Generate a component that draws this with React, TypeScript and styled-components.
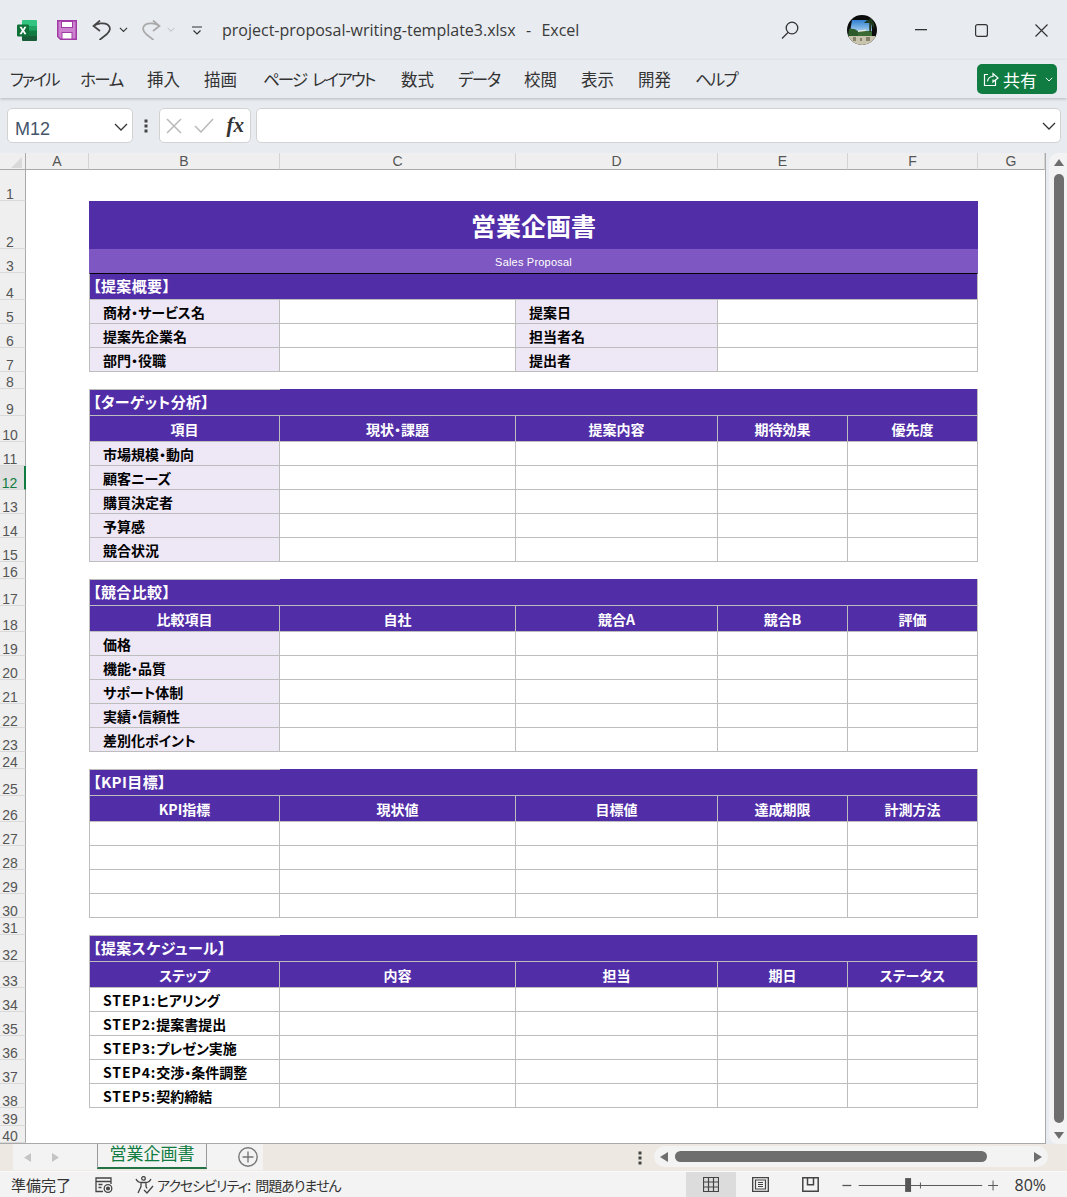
import React from "react";
import styled, { createGlobalStyle } from "styled-components";

const jp = `"Noto Sans CJK JP", "Noto Sans", sans-serif`;
const latin = `"Open Sans", "Noto Sans CJK JP", sans-serif`;
const line = "#bdbdbd";

const GlobalStyle = createGlobalStyle`
  html, body {
    margin: 0;
    padding: 0;
    overflow: hidden;
    background: #e8ebf0;
  }
  * {
    box-sizing: border-box;
  }
`;

const Window = styled.div`
  width: 1067px;
  height: 1197px;
  display: flex;
  flex-direction: column;
  background: #e8ebf0;
  overflow: hidden;
  font-family: ${jp};
  color: #333;
`;

/* title bar */
const TitleBar = styled.header`
  height: 60px;
  padding-left: 7px;
  display: flex;
  align-items: center;
  background: #e8ebf0;
`;

const Slot = styled.div<{ $w: number; $ml?: number }>`
  width: ${(p) => p.$w}px;
  margin-left: ${(p) => p.$ml ?? 0}px;
  flex: none;
  display: flex;
  align-items: center;
  justify-content: center;
`;

const FileName = styled.div`
  margin-left: 17px;
  font-family: ${latin};
  font-size: 16px;
  word-spacing: 1px;
  color: #3a3a3a;
  white-space: pre;
`;

const RightEdge = styled.div`
  margin-left: auto;
  display: flex;
  align-items: center;
`;

/* ribbon tabs */
const Ribbon = styled.nav`
  height: 38px;
  padding: 0 10px;
  display: flex;
  align-items: center;
  background: #e8ebf0;
  box-shadow: 0 1px 3px rgba(0, 0, 0, 0.22);
  position: relative;
`;

const RibbonTab = styled.span<{ $squeeze: number; $w: number }>`
  width: ${(p) => p.$w}px;
  flex: none;
  font-size: 16.5px;
  font-feature-settings: "palt";
  letter-spacing: ${(p) => p.$squeeze}px;
  word-spacing: 4px;
  color: #333;
  white-space: pre;
`;

const ShareButton = styled.button`
  margin-left: auto;
  width: 80px;
  height: 30px;
  border: 0;
  border-radius: 5px;
  padding: 0 0 0 6px;
  display: flex;
  align-items: center;
  gap: 4px;
  background: #107c41;
  color: #fff;
  font-family: ${jp};
  font-size: 17px;
`;

/* formula bar */
const FormulaBar = styled.div`
  height: 55px;
  padding: 10px 6px 10px 7px;
  display: flex;
  align-items: stretch;
`;

const Field = styled.div`
  background: #fff;
  border: 1px solid #d2d2d2;
  border-radius: 5px;
  display: flex;
  align-items: center;
`;

const NameBox = styled(Field)`
  width: 126px;
  padding: 0 4px 0 7px;
  justify-content: space-between;
  font-family: "Liberation Sans", sans-serif;
  font-size: 18px;
  color: #44546a;
  svg {
    margin-top: 3px;
  }
`;

const NameText = styled.span`
  padding-top: 7px;
`;

const GripSlot = styled.div`
  width: 26px;
  display: flex;
  align-items: center;
  justify-content: center;
`;

const FxBox = styled(Field)`
  width: 92px;
  padding: 0 6px;
  justify-content: space-between;
`;

const FxLabel = styled.span`
  font-family: "Liberation Serif", serif;
  font-style: italic;
  font-weight: 700;
  font-size: 21px;
  color: #333;
`;

const FormulaInput = styled(Field)`
  flex: 1;
  margin-left: 5px;
  padding-right: 4px;
  justify-content: flex-end;
`;

/* sheet */
const Main = styled.main`
  height: 991px;
  display: flex;
`;

const SheetFrame = styled.div`
  width: 1046px;
  flex: none;
  overflow: hidden;
  background: #fff;
  border-right: 1px solid #a9a9a9;
  border-bottom: 1px solid #a9a9a9;
`;

const SheetTable = styled.table`
  table-layout: fixed;
  border-collapse: separate;
  border-spacing: 0;
  width: 1045px;
  font-family: ${jp};
`;

const ColHead = styled.th`
  height: 17px;
  padding: 1px 0 0;
  background: #efefef;
  border-right: 1px solid #d4d4d4;
  border-bottom: 1px solid #a9a9a9;
  font-family: "Liberation Sans", sans-serif;
  font-size: 14px;
  font-weight: 400;
  line-height: 15px;
  color: #555;
`;

const Corner = styled(ColHead)`
  padding: 0;
  border-right: 1px solid #a9a9a9;
  svg {
    display: block;
    margin: 3px 0 0 11px;
  }
`;

const RowHead = styled.th<{ $active?: boolean }>`
  padding: 0 5px 0 0;
  text-align: center;
  vertical-align: bottom;
  background: ${(p) => (p.$active ? "#dfdfdf" : "#efefef")};
  border-right: ${(p) => (p.$active ? "2px solid #107c41" : "1px solid #a9a9a9")};
  border-bottom: 1px solid #d9d9d9;
  font-family: "Liberation Sans", sans-serif;
  font-size: 14px;
  font-weight: 400;
  line-height: 11px;
  color: ${(p) => (p.$active ? "#107c41" : "#555")};
`;

const Cell = styled.td`
  padding: 0;
  overflow: hidden;
  white-space: nowrap;
`;

const BoxCell = styled(Cell)`
  border-right: 1px solid ${line};
  border-bottom: 1px solid ${line};
  font-size: 14px;
  font-weight: 700;
  font-feature-settings: "palt";
  color: #000;
  tr > &:nth-child(3) {
    border-left: 1px solid ${line};
  }
`;

const LabelCell = styled(BoxCell)<{ $fill?: boolean }>`
  padding: 1px 0 0 13px;
  background: ${(p) => (p.$fill ? "#ede7f6" : "#fff")};
`;

const HeadCell = styled(BoxCell)`
  padding-top: 1px;
  text-align: center;
  background: #512da8;
  color: #fff;
`;

const SectionCell = styled(BoxCell)<{ $rule?: string }>`
  padding: 0 0 3px 3px;
  background: #512da8;
  color: #fff;
  font-size: 15px;
  letter-spacing: 0.4px;
  border-right: 0;
  border-top: ${(p) => (p.$rule ? `1px solid ${p.$rule}` : "0")};
`;

const SectionRest = styled(BoxCell)<{ $rule?: string }>`
  background: #512da8;
  border-top: ${(p) => (p.$rule ? `1px solid ${p.$rule}` : "0")};
`;

const TitleCell = styled(Cell)`
  padding-top: 0;
  text-align: center;
  background: #512da8;
  color: #fff;
  font-size: 25px;
  font-weight: 700;
`;

const SubtitleCell = styled(Cell)`
  padding-top: 1px;
  text-align: center;
  background: #7e57c2;
  color: #fff;
  font-family: "Liberation Sans", sans-serif;
  font-size: 11px;
  letter-spacing: 0.2px;
`;

const StepPrefix = styled.span`
  letter-spacing: 0.9px;
`;

/* vertical scroller */
const VScroll = styled.div`
  width: 18px;
  margin-left: 3px;
  padding: 5px 0 4px 5px;
  display: flex;
  flex-direction: column;
  background: #f3f3f3;
  border-radius: 9px 0 0 9px;
`;

const VThumb = styled.div`
  flex: 1;
  width: 10px;
  margin: 7px 0 8px;
  border-radius: 5px;
  background: #6e6e6e;
`;

/* sheet tabs */
const TabBar = styled.div`
  height: 27px;
  padding-left: 13px;
  display: flex;
  align-items: stretch;
  background: #ede8e2;
`;

const TabNav = styled.div`
  width: 84px;
  height: 26px;
  padding-left: 11px;
  display: flex;
  align-items: center;
  gap: 21px;
  background: #f3f3f3;
`;

const SheetTab = styled.div`
  width: 110px;
  height: 25px;
  text-align: center;
  background: #f3f3f3;
  border-left: 1px solid #999;
  border-right: 1px solid #999;
  border-bottom: 2px solid #217346;
  color: #107c41;
  font-size: 17px;
  line-height: 18px;
`;

const AddBlock = styled.div`
  width: 56px;
  height: 26px;
  padding-left: 31px;
  display: flex;
  align-items: center;
  background: #f3f3f3;
`;

const TabGrip = styled.div`
  margin-left: 369px;
  width: 16px;
  display: flex;
  align-items: center;
  justify-content: center;
`;

const HScroll = styled.div`
  width: 394px;
  height: 21px;
  margin: 2px 0 0 6px;
  padding: 0 5px 0 6px;
  display: flex;
  align-items: center;
  background: #f3f3f3;
  border-radius: 11px;
`;

const HThumb = styled.div`
  width: 312px;
  height: 11px;
  margin: 0 47px 0 7px;
  border-radius: 6px;
  background: #6e6e6e;
`;

/* status bar */
const StatusBar = styled.footer`
  height: 26px;
  padding-left: 11px;
  display: flex;
  align-items: center;
  background: #f3f3f3;
  border-top: 1px solid #fafafa;
  color: #333;
`;

const StatusText = styled.span`
  font-size: 15px;
  white-space: pre;
`;

const AccessText = styled.span`
  margin-left: 3px;
  font-size: 14px;
  font-feature-settings: "palt";
  letter-spacing: -1px;
  word-spacing: 3px;
  white-space: pre;
`;

const ViewButton = styled.div<{ $active?: boolean; $ml?: number }>`
  width: 50px;
  height: 25px;
  margin-left: ${(p) => p.$ml ?? 0}px;
  flex: none;
  display: flex;
  align-items: center;
  justify-content: center;
  background: ${(p) => (p.$active ? "#dcdcdc" : "transparent")};
`;

const ZoomLabel = styled.span`
  margin-left: 17px;
  font-family: ${latin};
  font-size: 16px;
`;

/* icons */
const Chevron = ({ size = 10, color = "#333" }: { size?: number; color?: string }) => (
  <svg width={size} height={size * 0.6} viewBox="0 0 10 6" fill="none">
    <path d="M1 1l4 4 4-4" stroke={color} strokeWidth="1.2" />
  </svg>
);

const ExcelLogo = () => (
  <svg width="20" height="21" viewBox="0 0 20 21">
    <rect x="5" y="0" width="15" height="21" rx="1.5" fill="#21a366" />
    <path d="M6.5 0H18.5A1.5 1.5 0 0 1 20 1.5V6H5V1.5A1.5 1.5 0 0 1 6.5 0Z" fill="#33c481" />
    <rect x="12" y="10.500" width="8" height="5" fill="#107c41" />
    <path d="M5 15.500H20V19.500A1.500 1.500 0 0 1 18.500 21H6.500A1.500 1.500 0 0 1 5 19.500Z" fill="#185c37" />
    <rect x="0" y="4.500" width="12" height="12" rx="1.200" fill="#0f7038" />
    <path d="M2.500 6.800h2.200L6 9.300l1.300-2.500h2.200L7.200 10.500l2.300 3.700H7.300L6 11.700l-1.300 2.500H2.500l2.300-3.700z" fill="#fff" />
  </svg>
);

const SaveIcon = () => (
  <svg width="20" height="20" viewBox="0 0 20 20">
    <path d="M.75.75h18.500v18.500H3.500L.75 16.500z" fill="#cc82cf" stroke="#a13aa5" strokeWidth="1.500" />
    <rect x="4.500" y="1.500" width="11" height="6" fill="#fff" stroke="#a13aa5" />
    <rect x="5" y="12.500" width="10" height="6.500" fill="#fff" stroke="#a13aa5" />
  </svg>
);

const UndoIcon = ({ color, flip }: { color: string; flip?: boolean }) => (
  <svg width="20" height="20" viewBox="0 0 20 20" fill="none" style={flip ? { transform: "scaleX(-1)" } : undefined}>
    <path
      d="M8 .5L1.500 6 8 11M1.500 6C6 3 12 2.500 15.500 4.500 19.500 7.500 18 11 15 14L7.500 20"
      stroke={color}
      strokeWidth="1.700"
    />
  </svg>
);

const Avatar = () => (
  <svg width="32" height="32" viewBox="0 0 32 32">
    <defs>
      <clipPath id="avatarClip">
        <circle cx="16" cy="16" r="15" />
      </clipPath>
      <linearGradient id="avatarSky" x1="0" y1="0" x2="0" y2="1">
        <stop offset="0" stopColor="#2f7fd0" />
        <stop offset="1" stopColor="#a9d3ee" />
      </linearGradient>
    </defs>
    <g clipPath="url(#avatarClip)">
      <rect width="32" height="32" fill="#0c0c0c" />
      <path d="M6 6h20v12H4z" fill="url(#avatarSky)" />
      <path d="M3 15c4-1 7 0 10 3l-1 4H2z" fill="#2f5a2c" />
      <path d="M12 17h14v5H12z" fill="#3c6a35" />
      <path d="M12 16.500l8-1v1.500l-8 1z" fill="#e6e6de" />
      <path d="M24 4c-1 4-1 9-.5 14h1.500c0-5 1-9 1-13z" fill="#2a3a22" />
      <path d="M18 9c2-3 5-4 8-3 2 2 3 5 2 9-1-3-3-5-4-6-2 0-4 0-6 0z" fill="#1e3a1d" />
      <path d="M3 22h26v9H3z" fill="#c9c4ae" />
      <path d="M7 23h3v4H7zM14 24h2v3h-2zM20 23h4v4h-4z" fill="#86826b" />
    </g>
  </svg>
);

const ShareIcon = () => (
  <svg width="16" height="16" viewBox="0 0 16 16" fill="none" stroke="#fff" strokeWidth="1.200">
    <path d="M5 3.500H1.500v11h11V9" />
    <path d="M4.500 10.500C5 7 7 5.500 10 5.500V2.500l5 4.500-5 4V8.500" />
  </svg>
);

const Grip = () => (
  <svg width="4" height="14" viewBox="0 0 4 14" fill="#444">
    <rect x="0.500" y="0.500" width="3" height="3" />
    <rect x="0.500" y="5.500" width="3" height="3" />
    <rect x="0.500" y="10.500" width="3" height="3" />
  </svg>
);

const Tri = ({ dir, size = 10, color = "#6e6e6e" }: { dir: "up" | "down" | "left" | "right"; size?: number; color?: string }) => {
  const paths = { up: "M5 1l5 7H0z", down: "M5 8L0 1h10z", left: "M0 5l8-5v10z", right: "M8 5L0 0v10z" };
  const box = dir === "up" || dir === "down" ? "0 0 10 9" : "0 0 8 10";
  const w = dir === "up" || dir === "down" ? size : size * 0.8;
  const h = dir === "up" || dir === "down" ? size * 0.9 : size;
  return (
    <svg width={w} height={h} viewBox={box} fill={color} style={{ flex: "none" }}>
      <path d={paths[dir]} />
    </svg>
  );
};

/* sheet rows */
type SheetRow =
  | { h: number; kind: "blank" }
  | { h: number; kind: "title" | "subtitle"; text: string }
  | { h: number; kind: "section"; text: string; rule: string; restRule?: string }
  | { h: number; kind: "pairs"; left: string; right: string }
  | { h: number; kind: "heads"; cells: string[] }
  | { h: number; kind: "items"; label: string; fill: boolean };

const block = (title: string, heads: string[], labels: string[], fill: boolean): SheetRow[] => [
  { h: 27, kind: "section", text: title, rule: line },
  { h: 26, kind: "heads", cells: heads },
  ...labels.map((label): SheetRow => ({ h: 24, kind: "items", label, fill })),
  { h: 17, kind: "blank" },
];

const sheetRows: SheetRow[] = [
  { h: 31, kind: "blank" },
  { h: 48, kind: "title", text: "営業企画書" },
  { h: 24, kind: "subtitle", text: "Sales Proposal" },
  { h: 27, kind: "section", text: "【提案概要】", rule: "#000", restRule: "#000" },
  { h: 24, kind: "pairs", left: "商材・サービス名", right: "提案日" },
  { h: 24, kind: "pairs", left: "提案先企業名", right: "担当者名" },
  { h: 24, kind: "pairs", left: "部門・役職", right: "提出者" },
  { h: 17, kind: "blank" },
  ...block(
    "【ターゲット分析】",
    ["項目", "現状・課題", "提案内容", "期待効果", "優先度"],
    ["市場規模・動向", "顧客ニーズ", "購買決定者", "予算感", "競合状況"],
    true
  ),
  ...block(
    "【競合比較】",
    ["比較項目", "自社", "競合A", "競合B", "評価"],
    ["価格", "機能・品質", "サポート体制", "実績・信頼性", "差別化ポイント"],
    true
  ),
  ...block("【KPI目標】", ["KPI指標", "現状値", "目標値", "達成期限", "計測方法"], ["", "", "", ""], false),
  ...block(
    "【提案スケジュール】",
    ["ステップ", "内容", "担当", "期日", "ステータス"],
    ["STEP1:ヒアリング", "STEP2:提案書提出", "STEP3:プレゼン実施", "STEP4:交渉・条件調整", "STEP5:契約締結"],
    false
  ).slice(0, -1),
  { h: 18, kind: "blank" },
  { h: 17, kind: "blank" },
];

const columns = [
  { name: "", w: 26 },
  { name: "A", w: 63 },
  { name: "B", w: 191 },
  { name: "C", w: 236 },
  { name: "D", w: 202 },
  { name: "E", w: 130 },
  { name: "F", w: 130 },
  { name: "G", w: 67 },
];

const ItemLabel = ({ text }: { text: string }) => {
  const step = text.match(/^(STEP\d:)(.*)$/);
  if (!step) return <>{text}</>;
  return (
    <>
      <StepPrefix>{step[1]}</StepPrefix>
      {step[2]}
    </>
  );
};

const RowCells = ({ row }: { row: SheetRow }) => {
  switch (row.kind) {
    case "title":
      return <TitleCell colSpan={5}>{row.text}</TitleCell>;
    case "subtitle":
      return <SubtitleCell colSpan={5}>{row.text}</SubtitleCell>;
    case "section":
      return (
        <>
          <SectionCell $rule={row.rule}>{row.text}</SectionCell>
          <SectionRest colSpan={4} $rule={row.restRule} />
        </>
      );
    case "pairs":
      return (
        <>
          <LabelCell $fill>{row.left}</LabelCell>
          <BoxCell />
          <LabelCell $fill>{row.right}</LabelCell>
          <BoxCell colSpan={2} />
        </>
      );
    case "heads":
      return (
        <>
          {row.cells.map((c) => (
            <HeadCell key={c}>{c}</HeadCell>
          ))}
        </>
      );
    case "items":
      return (
        <>
          <LabelCell $fill={row.fill}>
            <ItemLabel text={row.label} />
          </LabelCell>
          <BoxCell />
          <BoxCell />
          <BoxCell />
          <BoxCell />
        </>
      );
    default:
      return <Cell colSpan={5} />;
  }
};

const Sheet = () => (
  <SheetTable>
    <colgroup>
      {columns.map((c, i) => (
        <col key={i} style={{ width: c.w }} />
      ))}
    </colgroup>
    <thead>
      <tr>
        {columns.map((c, i) =>
          i === 0 ? (
            <Corner key={i}>
              <svg width="11" height="11" viewBox="0 0 11 11">
                <path d="M11 0v11H0z" fill="#d9d9d9" />
              </svg>
            </Corner>
          ) : (
            <ColHead key={i}>{c.name}</ColHead>
          )
        )}
      </tr>
    </thead>
    <tbody>
      {sheetRows.map((row, i) => (
        <tr key={i} style={{ height: row.h }}>
          <RowHead $active={i + 1 === 12}>{i + 1}</RowHead>
          <Cell />
          <RowCells row={row} />
          <Cell />
        </tr>
      ))}
    </tbody>
  </SheetTable>
);

const tabs: { text: string; squeeze: number; w: number }[] = [
  { text: "ファイル", squeeze: -2.2, w: 70 },
  { text: "ホーム", squeeze: -1.5, w: 67 },
  { text: "挿入", squeeze: 0, w: 57 },
  { text: "描画", squeeze: 0, w: 59 },
  { text: "ページ レイアウト", squeeze: -1.9, w: 138 },
  { text: "数式", squeeze: 0, w: 57 },
  { text: "データ", squeeze: -1.5, w: 66 },
  { text: "校閲", squeeze: 0, w: 57 },
  { text: "表示", squeeze: 0, w: 57 },
  { text: "開発", squeeze: 0, w: 57 },
  { text: "ヘルプ", squeeze: -1.8, w: 50 },
];

const App: React.FunctionComponent = () => {
  return (
    <Window>
      <GlobalStyle />
      <TitleBar>
        <Slot $w={40}>
          <ExcelLogo />
        </Slot>
        <Slot $w={40}>
          <SaveIcon />
        </Slot>
        <Slot $w={29}>
          <UndoIcon color="#444" />
        </Slot>
        <Slot $w={14}>
          <Chevron size={9} />
        </Slot>
        <Slot $w={33} $ml={4}>
          <UndoIcon color="#a9a9a9" flip />
        </Slot>
        <Slot $w={8}>
          <Chevron size={9} color="#b5b5b5" />
        </Slot>
        <Slot $w={16} $ml={14}>
          <svg width="10" height="9" viewBox="0 0 10 9" fill="none" stroke="#333" strokeWidth="1.200">
            <path d="M0 1h10M1.500 4.500L5 8l3.500-3.500" />
          </svg>
        </Slot>
        <FileName>project-proposal-writing-template3.xlsx  -  Excel</FileName>
        <RightEdge>
          <Slot $w={18}>
            <svg width="18" height="18" viewBox="0 0 18 18" fill="none" stroke="#333" strokeWidth="1.300">
              <circle cx="11" cy="7" r="5.800" />
              <path d="M7 11.500L1 17.500" />
            </svg>
          </Slot>
          <Slot $w={32} $ml={47}>
            <Avatar />
          </Slot>
          <Slot $w={12} $ml={37}>
            <svg width="12" height="2" viewBox="0 0 12 2">
              <rect width="12" height="1.300" fill="#333" />
            </svg>
          </Slot>
          <Slot $w={13} $ml={48}>
            <svg width="13" height="13" viewBox="0 0 13 13" fill="none" stroke="#333" strokeWidth="1.200">
              <rect x="0.600" y="0.600" width="11.800" height="11.800" rx="2" />
            </svg>
          </Slot>
          <Slot $w={13} $ml={47}>
            <svg width="13" height="13" viewBox="0 0 13 13" fill="none" stroke="#333" strokeWidth="1.200">
              <path d="M.5.500l12 12M12.500.500l-12 12" />
            </svg>
          </Slot>
          <Slot $w={19} />
        </RightEdge>
      </TitleBar>

      <Ribbon>
        {tabs.map((t) => (
          <RibbonTab key={t.text} $squeeze={t.squeeze} $w={t.w}>
            {t.text}
          </RibbonTab>
        ))}
        <ShareButton>
          <ShareIcon />
          共有
          <Slot $w={8} $ml={4}>
            <Chevron size={8} color="#fff" />
          </Slot>
        </ShareButton>
      </Ribbon>

      <FormulaBar>
        <NameBox>
          <NameText>M12</NameText>
          <svg width="14" height="8" viewBox="0 0 14 8" fill="none" stroke="#333" strokeWidth="1.300">
            <path d="M1 1l6 6 6-6" />
          </svg>
        </NameBox>
        <GripSlot>
          <Grip />
        </GripSlot>
        <FxBox>
          <svg width="16" height="16" viewBox="0 0 16 16" fill="none" stroke="#b9b9b9" strokeWidth="1.500">
            <path d="M1 1l14 14M15 1L1 15" />
          </svg>
          <svg width="20" height="15" viewBox="0 0 20 15" fill="none" stroke="#b9b9b9" strokeWidth="1.500">
            <path d="M1 8l6 6L19 1" />
          </svg>
          <FxLabel>fx</FxLabel>
        </FxBox>
        <FormulaInput>
          <Slot $w={14}>
            <svg width="14" height="8" viewBox="0 0 14 8" fill="none" stroke="#333" strokeWidth="1.300">
              <path d="M1 1l6 6 6-6" />
            </svg>
          </Slot>
        </FormulaInput>
      </FormulaBar>

      <Main>
        <SheetFrame>
          <Sheet />
        </SheetFrame>
        <VScroll>
          <Tri dir="up" />
          <VThumb />
          <Tri dir="down" />
        </VScroll>
      </Main>

      <TabBar>
        <TabNav>
          <Tri dir="left" size={9} color="#c4c4c4" />
          <Tri dir="right" size={9} color="#c4c4c4" />
        </TabNav>
        <SheetTab>営業企画書</SheetTab>
        <AddBlock>
          <svg width="20" height="20" viewBox="0 0 20 20" fill="none" stroke="#777" strokeWidth="1.400">
            <circle cx="10" cy="10" r="9.200" />
            <path d="M10 4.500v11M4.500 10h11" />
          </svg>
        </AddBlock>
        <TabGrip>
          <Grip />
        </TabGrip>
        <HScroll>
          <Tri dir="left" />
          <HThumb />
          <Tri dir="right" />
        </HScroll>
      </TabBar>

      <StatusBar>
        <StatusText>準備完了</StatusText>
        <Slot $w={18} $ml={24}>
          <svg width="18" height="16" viewBox="0 0 18 16" fill="none" stroke="#444" strokeWidth="1.300">
            <path d="M8 14.500H1V1h15v6M1 4.500h15" />
            <path d="M3.500 7.500h4M3.500 10.500h3" />
            <circle cx="13" cy="11.500" r="3.800" />
            <circle cx="13" cy="11.500" r="1.400" fill="#444" />
          </svg>
        </Slot>
        <Slot $w={19} $ml={22}>
          <svg width="19" height="18" viewBox="0 0 19 18" fill="none" stroke="#444" strokeWidth="1.300">
            <circle cx="8.500" cy="2.400" r="1.800" />
            <path d="M1 3c1 2 3 3.500 5 3.500h5c2 0 4-1.500 5-3.500M6 6.500v4L3 17M11 6.500v4l1 2" />
            <path d="M9 14l3 3 6-7" />
          </svg>
        </Slot>
        <AccessText>アクセシビリティ: 問題ありません</AccessText>
        <ViewButton $active $ml={345}>
          <svg width="16" height="15" viewBox="0 0 16 15" fill="none" stroke="#444" strokeWidth="1.200">
            <path d="M.5.500h15v14H.5zM5.500.500v14M10.500.500v14M.5 5h15M.5 10h15" />
          </svg>
        </ViewButton>
        <ViewButton>
          <svg width="17" height="15" viewBox="0 0 17 15" fill="none" stroke="#444" strokeWidth="1.200">
            <path d="M.6.600h15.800v13.800H.6z" strokeWidth="1.500" />
            <path d="M3.500 3h10v9h-10zM6 5.500h5M6 7.500h5M6 9.500h5" />
          </svg>
        </ViewButton>
        <ViewButton>
          <svg width="17" height="15" viewBox="0 0 17 15" fill="none" stroke="#444" strokeWidth="1.500">
            <path d="M.8.800h15.400v13.400H.8zM5.500.800v7h6V.800" />
          </svg>
        </ViewButton>
        <Slot $w={163} $ml={-1}>
          <svg width="165" height="16" viewBox="0 0 165 16" fill="none" stroke="#555">
            <path d="M7.500 8.500h9" strokeWidth="1.300" />
            <path d="M24 8.500h125" />
            <rect x="71" y="1" width="6" height="14" fill="#555" stroke="none" />
            <path d="M86.500 5.500v6" />
            <path d="M155 8.500h10M160 3.500v10" />
          </svg>
        </Slot>
        <ZoomLabel>80%</ZoomLabel>
      </StatusBar>
    </Window>
  );
};

export default App;
